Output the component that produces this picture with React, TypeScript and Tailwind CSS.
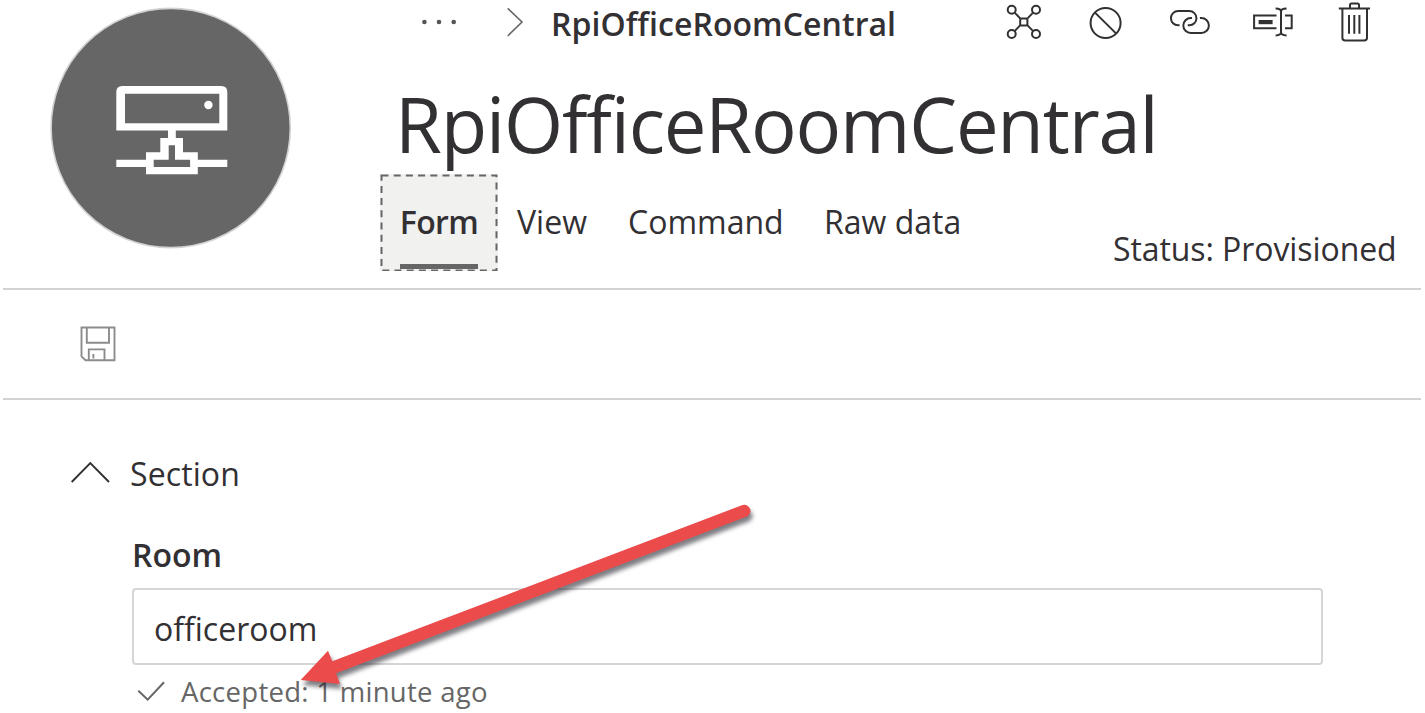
import React from "react";

const actions = [
  {
    label: "Relationships",
    box: "1006 4 40 38",
    size: "w-10 h-[38px]",
    art: (
      <>
        <circle cx="1011.7" cy="9.7" r="4" />
        <circle cx="1036" cy="9.7" r="4" />
        <circle cx="1011.7" cy="34" r="4" />
        <circle cx="1036" cy="34" r="4" />
        <rect x="1020.2" y="18.4" width="7.2" height="7.2" rx="1.5" />
        <path d="M1014.6 12.6l5.8 6M1033.1 12.6l-5.8 6M1014.6 31.1l5.8-6M1033.1 31.1l-5.8-6" />
      </>
    ),
  },
  {
    label: "Block",
    box: "1088 4 40 38",
    size: "w-10 h-[38px]",
    art: (
      <>
        <circle cx="1105.6" cy="23" r="15" />
        <path d="M1095 12.6l21 20.8" />
      </>
    ),
  },
  {
    label: "Connect",
    box: "1170 4 40 38",
    size: "w-10 h-[38px]",
    art: (
      <path d="M1179.6 25.3h-1.5a7.15 7.15 0 0 1 0-14.3h11.2a7.15 7.15 0 0 1 0 14.3h-1.6M1192 18h-1.2a7.5 7.5 0 0 0 0 15h10.6a7.5 7.5 0 0 0 0-15h-1.5" />
    ),
  },
  {
    label: "Rename",
    box: "1252 4 42 38",
    size: "w-[42px] h-[38px]",
    art: (
      <>
        <path d="M1276.5 15.6h-22.4v12.6h22.4M1285 15.6h6.7v12.6h-6.7M1281 11.5v21M1275.6 8.4c3.4 0 5.4.8 5.4 3.1 0-2.3 2-3.1 5.6-3.1M1275.6 35.4c3.4 0 5.4-.8 5.4-3.1 0 2.3 2 3.1 5.6 3.1" />
        <path d="M1258.6 20h14v4.2h-14z" fill="currentColor" stroke="none" />
      </>
    ),
  },
  {
    label: "Delete",
    box: "1336 2 36 42",
    size: "w-9 h-[42px]",
    art: (
      <path d="M1338.8 8.5h31.2M1350 8v-3q0-1.5 1.5-1.5h6q1.5 0 1.5 1.5v3M1342.4 8.5v29.3q0 2.8 2.8 2.8h19q2.8 0 2.8-2.8V8.5M1349 15v18.7M1354.3 15v18.7M1359.4 15v18.7" />
    ),
  },
];

function Actions() {
  return (
    <div className="flex h-[46px] items-center gap-[42px]">
      {actions.map((a) => (
        <button key={a.label} aria-label={a.label} className="block shrink-0">
          <svg
            viewBox={a.box}
            className={a.size}
            fill="none"
            stroke="currentColor"
            strokeWidth="2"
          >
            {a.art}
          </svg>
        </button>
      ))}
    </div>
  );
}

function Avatar() {
  return (
    <svg viewBox="50 7 242 242" className="mt-[7px] ml-[50px] h-[242px] w-[242px] shrink-0">
      <circle cx="170.7" cy="128" r="119.6" fill="#666" stroke="#d2d2d2" strokeWidth="1.6" />
      <path
        fill="#fff"
        fillRule="evenodd"
        d="M116.3 130.6V92q0-6 6-6h99q6 0 6 6v38.6zM125 123.3h94.3V93.7H125zM168 130.6h7.8v7.4h7.2v14.3h14.8v7.4h29.5v7.3h-29.5v7.3H146V167h-29.7v-7.3H146v-7.4h14.3V138h7.7zM168.7 145.3v14.4h-15v7.3h36.4v-7.3H175v-14.4z"
      />
      <circle cx="208.4" cy="105" r="4.2" fill="#fff" />
    </svg>
  );
}

export default function App() {
  return (
    <div
      className="relative flex h-[713px] w-[1425px] flex-col overflow-hidden bg-white text-[32px] leading-[44px] text-[#323033]"
      style={{ fontFamily: '"Open Sans", "Noto Sans", sans-serif', fontVariantLigatures: "none" }}
    >
      <header className="flex h-[288px] shrink-0">
        <Avatar />
        <div className="ml-[88px] flex w-[1041px] flex-col">
          <div className="flex h-[46px] items-center">
            <svg viewBox="420 4 108 38" className="ml-10 h-[38px] w-[108px] shrink-0" fill="none">
              <g fill="#555">
                <circle cx="424.4" cy="22" r="2.3" />
                <circle cx="439" cy="22" r="2.3" />
                <circle cx="453.7" cy="22" r="2.3" />
              </g>
              <path d="M507.7 8.3L522 22l-14.3 14" stroke="#666" strokeWidth="1.6" />
            </svg>
            <span className="ml-[23px] w-[455px] shrink-0 whitespace-nowrap pt-px font-semibold tracking-[0.06px]">
              RpiOfficeRoomCentral
            </span>
            <Actions />
          </div>
          <h1 className="ml-[15px] h-[128px] whitespace-nowrap pt-[23px] text-[76px] leading-[110px] tracking-[-1.2px]">
            RpiOfficeRoomCentral
          </h1>
          <div className="flex">
            <nav className="flex h-[98px] w-[733px] items-start whitespace-nowrap">
              <div className="relative flex h-[97px] w-[118px] shrink-0 flex-col items-center bg-[#f1f1f0]">
                <span className="pt-[26px] font-semibold tracking-[-0.6px]">Form</span>
                <span className="mt-5 h-[5px] w-[78px] bg-[#666]" />
                <svg className="absolute inset-0 h-full w-full" fill="none">
                  <rect x="1.5" y="1.5" width="115" height="95" stroke="#666" strokeWidth="2" strokeDasharray="7 5.2" />
                </svg>
              </div>
              <span className="ml-[19px] w-[111px] pt-[26px]">View</span>
              <span className="w-[196px] pt-[26px]">Command</span>
              <span className="pt-[26px]">Raw data</span>
            </nav>
            <span className="whitespace-nowrap pt-[53px] tracking-[-0.08px]">Status: Provisioned</span>
          </div>
        </div>
      </header>

      <div className="mx-[3px] flex h-[112px] w-[1418px] shrink-0 items-center border-y-2 border-[#d3d3d3]">
        <svg viewBox="80 326 36 36" className="ml-[77px] h-9 w-9" fill="none" stroke="#8c8c8c" strokeWidth="1.9">
          <path d="M81.5 327.5h33v32.7H85.5l-4-3.8zM86.8 327.5v15.2H109v-15.2M88.8 360v-10.6h15.7V360M93.4 354v4.5" />
        </svg>
      </div>

      <main className="flex flex-col">
        <div className="flex h-[132px] items-center">
          <svg viewBox="70 460 41 24" className="ml-[70px] mt-3 h-6 w-[41px]" fill="none" stroke="#323033" strokeWidth="1.9">
            <path d="M71.7 482l18.6-18.9L109 482" />
          </svg>
          <span className="ml-[19px] mt-4 tracking-[0.1px]">Section</span>
        </div>
        <div className="ml-[132px] flex w-[1191px] flex-col">
          <span className="h-[56px] pt-px font-semibold leading-[44px]">Room</span>
          <div className="flex h-[77px] items-center rounded-[4px] border-2 border-[#d5d5d5] pl-5 pt-1">
            officeroom
          </div>
          <div className="flex h-12 items-center text-[27.5px] text-[#666]">
            <svg viewBox="136 678 30 24" className="ml-1 mt-1 h-6 w-[30px]" fill="none" stroke="#666" strokeWidth="2">
              <path d="M138.3 689.7l9.4 9L164 681.3" />
            </svg>
            <span className="ml-[15px] mt-[5px] tracking-[0.28px]">Accepted: 1 minute ago</span>
          </div>
        </div>
      </main>

      <svg
        viewBox="280 490 490 210"
        className="absolute left-[280px] top-[490px] h-[210px] w-[490px] drop-shadow-[2px_5px_2px_rgba(40,40,50,0.6)]"
      >
        <path
          fill="#eb4b4b"
          d="M300.7 680L328 650.7l4.3 10.6L742.5 505a6.2 6.2 0 0 1 4.3 11.6L336 673.3l4 10.7z"
        />
      </svg>
    </div>
  );
}
